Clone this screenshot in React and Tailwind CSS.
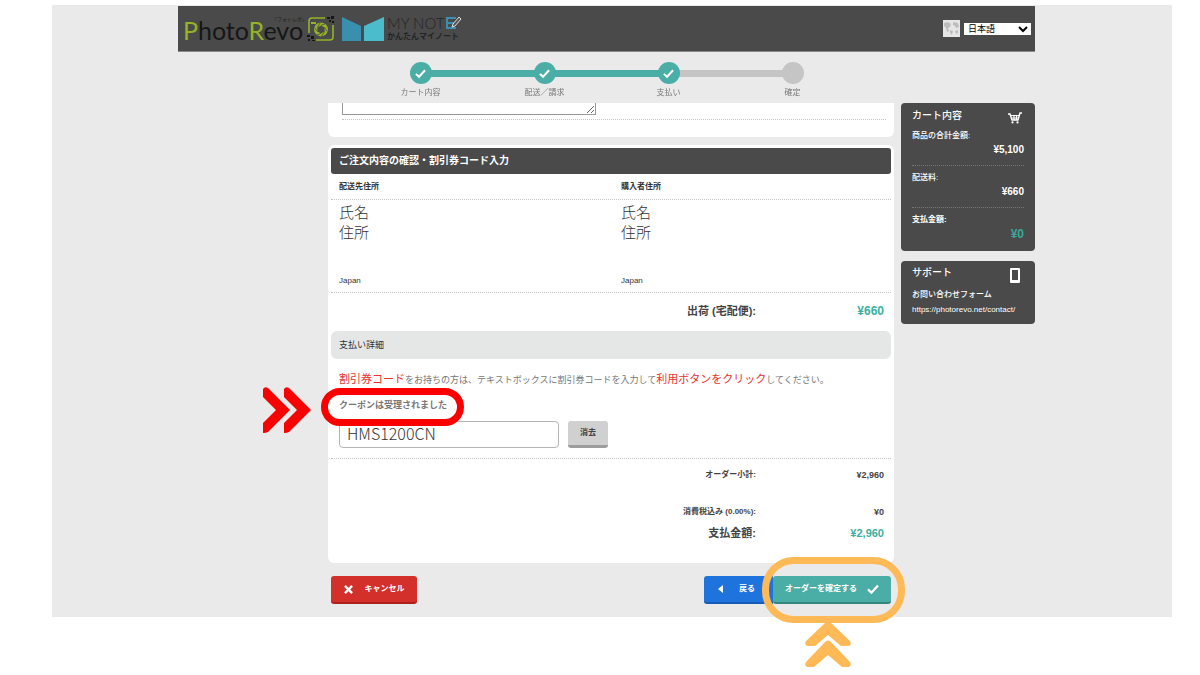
import React from 'react';

const STEPS = [
  { label: 'カート内容', done: true, line: true },
  { label: '配送／請求', done: true, line: true },
  { label: '支払い', done: true, line: false },
  { label: '確定', done: false, line: false },
];

const CheckMark = ({ className }) => (
  <svg viewBox="0 0 12 12" className={className} fill="none" stroke="currentColor" strokeWidth="2.2" aria-hidden="true">
    <path d="M1 6.4 4.4 9.6 11 2.4" />
  </svg>
);

const Logo = () => (
  <a href="#" className="relative flex items-center pt-[3px]" aria-label="PhotoRevo">
    <span className="font-['Lato'] text-[25px] leading-8 text-[#161616]">
      <span className="text-[#93b427]">P</span>hoto<span className="text-[#93b427]">R</span>evo
    </span>
    <span className="absolute right-7 top-1 text-[5px] leading-[8px] text-[#222]">「フォトレボ」</span>
    <svg viewBox="0 0 28 26" className="mb-[3px] ml-1 h-[26px] w-7" fill="none" aria-hidden="true">
      <path d="M2 17V5a3 3 0 0 1 3-3h13M26 9v12a3 3 0 0 1-3 3H9" stroke="#93b427" strokeWidth="1.6" />
      <path d="M4 6h5v2H4z" fill="#93b427" />
      <circle cx="14" cy="13.4" r="7" fill="#93b427" />
      <path d="m14 9.4 3.6 2v4l-3.6 2-3.6-2v-4z" fill="#4a4a4a" />
      <path d="m14 9.4 5-2M17.6 11.4l2.6 4M17.6 15.4l-3 5M14 17.4l-5 2M10.400 15.400l-3-4M10.400 11.400l3-5" stroke="#4a4a4a" strokeWidth=".8" />
      <path d="M20 1h3v2h-3zM24 0h3v3h-3zM22 4h2v2h-2zM25 5h2v2h-2zM0 19h3v2H0zM4 20h3v3H4zM1 23h2v2H1zM5 24h3v1H5z" fill="#161616" />
    </svg>
  </a>
);

const NoteLogo = () => (
  <a href="#" className="ml-[7px] flex items-center gap-[3px]" aria-label="かんたんマイノート">
    <svg viewBox="0 0 42 24" className="h-6 w-[42px]" aria-hidden="true">
      <path d="M0 0 19 9V24H0z" fill="#3b8fae" />
      <path d="M42 0 22 9V24H42z" fill="#4bbccb" />
    </svg>
    <span className="flex flex-col text-[#242424]">
      <span className="flex items-center font-['Lato'] text-[15px] font-light leading-[15px]">
        MY NOT
        <svg viewBox="0 0 18 14" className="h-[14px] w-[18px]" fill="none" aria-hidden="true">
          <path d="M12 2H3v10h9M3 7h7" stroke="#3b8fae" strokeWidth="2" />
          <path d="m8 11 1-3 6-7 2 2-6 7z" fill="#555" stroke="#ddd" />
        </svg>
      </span>
      <span className="text-[8px] font-bold leading-[11px]">かんたんマイノート</span>
    </span>
  </a>
);

const Header = () => (
  <header className="flex h-[46px] items-center border-b border-[#8a8a8a] bg-[#4a4a4a] pl-[5px] pr-1">
    <Logo />
    <NoteLogo />
    <div className="ml-auto flex items-center gap-1">
      <svg viewBox="0 0 17 17" className="size-[17px]" aria-hidden="true">
        <rect width="17" height="17" fill="#e6e6e6" />
        <path d="M1 3l4-1 3 2-1 3-2 1 1 3-2 1-1-4-2-2zM10 2l5 1 1 4-3 1-1-2-2-1zM7 10l3 1-1 4-2-2zM12 11l3-1v3l-2 1z" fill="#bdbdbd" />
      </svg>
      <select aria-label="言語" className="h-3 w-[67px] bg-white pl-0 text-[9px] leading-3 text-black">
        <option>日本語</option>
      </select>
    </div>
  </header>
);

const Steps = () => (
  <ol className="mx-auto grid h-[51px] w-[496px] grid-cols-4 pt-[10px]">
    {STEPS.map((step, i) => (
      <li key={step.label} className="relative flex flex-col items-center">
        {i < STEPS.length - 1 && (
          <span className={`absolute left-1/2 top-2 h-[7px] w-full ${step.line ? 'bg-[#4aaea7]' : 'bg-[#c5c5c5]'}`} />
        )}
        <span
          className={`relative z-10 flex size-[22px] items-center justify-center rounded-full text-white ${step.done ? 'bg-[#4aaea7]' : 'bg-[#c5c5c5]'}`}
        >
          {step.done && <CheckMark className="size-[11px]" />}
        </span>
        <span className="mt-[3px] text-[8px] leading-3 text-[#777]">{step.label}</span>
      </li>
    ))}
  </ol>
);

const Address = () => (
  <div>
    <p className="text-[15px] font-light leading-5 text-[#333]">
      氏名
      <br />
      住所
    </p>
    <p className="mt-8 text-[8px] leading-3">Japan</p>
  </div>
);

const CouponForm = () => (
  <div className="border-b border-dotted border-[#c4c4c4] px-2 pb-[10px] pt-[10px]">
    <p className="text-[9px] leading-5 text-[#777]">
      <span className="text-[11px] text-[#e8322e]">割引券コード</span>
      をお持ちの方は、テキストボックスに割引券コードを入力して
      <span className="text-[11px] text-[#e8322e]">利用ボタンをクリック</span>
      してください。
    </p>
    <div className="relative mt-[5px] w-fit">
      <p className="text-[9px] font-bold leading-5 text-[#777]">クーポンは受理されました</p>
      <span className="absolute -left-[18px] -top-[7px] z-10 h-[38px] w-[143px] rounded-full border-[7px] border-[#fa0000]" />
      <svg viewBox="0 0 48 46" className="absolute -left-[76px] -top-2 h-[46px] w-12" fill="#fa0000" aria-hidden="true">
        <path d="M0 2Q2-1 5 1L27 23 5 45Q3 46 0 46V36L13 23 0 10z" />
        <path d="M21 2Q23-1 26 1L48 23 26 45Q24 46 21 46V36L34 23 21 10z" />
      </svg>
    </div>
    <div className="mt-[6px] flex items-center gap-[9px]">
      <input
        type="text"
        aria-label="割引券コード"
        defaultValue="HMS1200CN"
        className="h-[27px] w-[220px] rounded-[4px] border border-[#b5b5b5] bg-white px-[7px] pb-1 font-['Noto_Sans_CJK_JP',sans-serif] text-[16px] font-light text-[#333]"
      />
      <button
        type="button"
        className="h-[27px] w-10 rounded-[3px] border-b-[3px] border-[#9d9d9d] bg-[#d0d0d0] text-[8px] font-bold text-[#444]"
      >
        消去
      </button>
    </div>
  </div>
);

const Totals = () => (
  <table className="mb-[10px] mt-[6px] w-full text-right text-[#444]">
    <tbody>
      <tr className="h-5 text-[8px] leading-5">
        <th scope="row" className="p-0 text-right">オーダー小計:</th>
        <td className="w-[135px] pr-[7px] text-[9px] font-bold">¥2,960</td>
      </tr>
      <tr className="h-[37px] align-bottom text-[8px] leading-5">
        <th scope="row" className="p-0 text-right">消費税込み (0.00%):</th>
        <td className="pr-[7px] text-[9px] font-bold">¥0</td>
      </tr>
      <tr className="text-[11px] leading-[22px]">
        <th scope="row" className="p-0 text-right">支払金額:</th>
        <td className="pr-[7px] font-bold text-[#3bb09f]">¥2,960</td>
      </tr>
    </tbody>
  </table>
);

const Actions = () => (
  <div className="mt-[13px] flex px-[3px] text-[8px] font-bold text-white">
    <button type="button" className="flex h-7 w-[86px] items-center justify-center gap-3 rounded-[3px] border-b-2 border-[#ae201d] bg-[#d3302b]">
      <svg viewBox="0 0 10 10" className="size-[9px]" stroke="currentColor" strokeWidth="2.6" aria-hidden="true">
        <path d="M1 1 9 9M9 1 1 9" />
      </svg>
      キャンセル
    </button>
    <button type="button" className="ml-auto flex h-7 w-[69px] items-center gap-4 rounded-l-[3px] border-b-2 border-[#155cb6] bg-[#1e74dc] pl-[14px]">
      <svg viewBox="0 0 5 8" className="h-2 w-[5px]" fill="currentColor" aria-hidden="true">
        <path d="M5 0V8L0 4z" />
      </svg>
      戻る
    </button>
    <div className="relative">
      {/* backing strip keeps the page colour visible behind the rounded corners */}
      <div className="bg-[#eaeaea]">
        <button type="button" className="flex h-7 w-[118px] items-center justify-center gap-[10px] rounded-[3px] border-b-2 border-[#35857f] bg-[#4aaea7]">
          オーダーを確定する
          <CheckMark className="size-3" />
        </button>
      </div>
      <span className="absolute -left-[11px] -top-[19px] h-[66px] w-[143px] rounded-[32px] border-[7px] border-[#ffb957]" />
      <svg viewBox="0 0 46 46" className="absolute left-8 top-[46px] size-[46px]" fill="#ffb957" aria-hidden="true">
        <path d="M1 19 20 1Q23-1 26 1L45 19Q47 22 44 24H36L23 13 10 24H2Q-1 22 1 19z" />
        <path d="M1 40 20 20Q23 17 26 20L45 40Q47 43 44 45H37L23 33 9 45H2Q-1 43 1 40z" />
      </svg>
    </div>
  </div>
);

const OrderReview = () => (
  <main className="min-w-0 flex-1">
    <div className="h-[34px] rounded-b-[6px] bg-white pl-[14px] pr-2">
      <div className="border-b border-dotted border-[#c4c4c4] pb-1">
        <textarea
          aria-label="備考"
          className="block h-3 w-[254px] border border-t-0 border-[#999] bg-white"
        />
      </div>
    </div>

    <section className="mt-2 rounded-[6px] bg-white px-[3px] pb-[9px] pt-[3px]">
      <h2 className="h-[26px] rounded-[3px] bg-[#4a4a4a] px-2 text-[10px] font-bold leading-[26px] text-white">
        ご注文内容の確認・割引券コード入力
      </h2>
      <div className="grid grid-cols-2 gap-5 border-b border-dotted border-[#c4c4c4] px-2 text-[8px] font-bold leading-[25px]">
        <h3>配送先住所</h3>
        <h3>購入者住所</h3>
      </div>
      <div className="grid grid-cols-2 gap-5 border-b border-dotted border-[#c4c4c4] px-2 pb-[5px] pt-[3px]">
        <Address />
        <Address />
      </div>
      <dl className="flex h-[38px] items-center justify-end pb-[2px] pr-[7px] font-bold text-[#444]">
        <dt className="text-[11px]">出荷 (宅配便):</dt>
        <dd className="w-32 text-right text-[12px] text-[#3bb09f]">¥660</dd>
      </dl>
      <h3 className="h-7 rounded-[6px] bg-[#e5e7e6] px-2 text-[9px] leading-7">支払い詳細</h3>
      <CouponForm />
      <Totals />
    </section>

    <Actions />
  </main>
);

const Sidebar = () => (
  <aside className="flex w-[134px] shrink-0 flex-col gap-[10px] text-white">
    <section className="rounded-[4px] bg-[#4a4a4a] px-[11px] pb-[10px] pt-[5px]">
      <div className="flex h-[19px] justify-between">
        <h2 className="text-[10px] font-medium leading-4">カート内容</h2>
        <svg viewBox="0 0 15 12" className="mr-[2px] mt-1 h-3 w-[15px]" fill="none" stroke="currentColor" aria-hidden="true">
          <path d="M1 2h2l2 6h6l2-7h2" strokeWidth="1.4" />
          <path d="M4 3.5h8M5 6h6M7 3v5M9.5 3v5" strokeWidth="1.2" />
          <circle cx="5.5" cy="10.4" r="1.1" fill="currentColor" stroke="none" />
          <circle cx="10.5" cy="10.4" r="1.1" fill="currentColor" stroke="none" />
        </svg>
      </div>
      <dl className="text-[8px] font-medium leading-[14px]">
        <dt className="pt-[2px]">商品の合計金額:</dt>
        <dd className="border-b border-dotted border-[#777] pb-2 text-right text-[10px] font-bold">¥5,100</dd>
        <dt className="pt-[5px]">配送料:</dt>
        <dd className="border-b border-dotted border-[#777] pb-2 text-right text-[10px] font-bold">¥660</dd>
        <dt className="pt-[5px] font-bold">支払金額:</dt>
        <dd className="text-right text-[12px] font-bold text-[#3ba79c]">¥0</dd>
      </dl>
    </section>
    <section className="rounded-[4px] bg-[#4a4a4a] px-[11px] pb-[7px] pt-1 text-[8px] font-medium leading-4">
      <div className="flex h-[22px] justify-between">
        <h2 className="text-[10px] font-medium leading-4">サポート</h2>
        <svg viewBox="0 0 10 15" className="mr-1 mt-[3px] h-[15px] w-[10px]" aria-hidden="true">
          <path d="M1 0H9Q10 0 10 1V14Q10 15 9 15H1Q0 15 0 14V1Q0 0 1 0zM2 2V12H8V2z" fill="currentColor" fillRule="evenodd" />
        </svg>
      </div>
      <p>お問い合わせフォーム</p>
      <a href="https://photorevo.net/contact/" className="block whitespace-nowrap leading-[14px]">
        https://photorevo.net/contact/
      </a>
    </section>
  </aside>
);

const App = () => {
  return (
    <div className="min-h-screen bg-white pl-[52px] pr-7 pt-[5px] font-['Liberation_Sans','Noto_Sans_CJK_JP',sans-serif] text-[#333]">
      <div className="bg-[#eaeaea] pb-[13px] pl-[126px] pr-[137px] pt-px">
        <Header />
        <Steps />
        <div className="flex items-start gap-[7px] pl-[150px]">
          <OrderReview />
          <Sidebar />
        </div>
      </div>
    </div>
  );
};

export default App;
